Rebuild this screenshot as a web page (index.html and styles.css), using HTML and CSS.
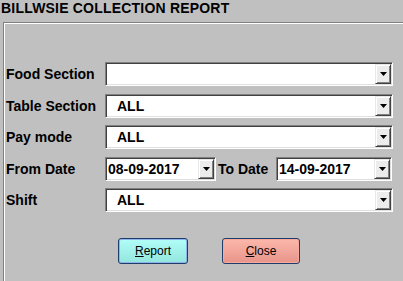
FILE: index.html
```html
<html>
  <head>
    <link rel="stylesheet" href="styles.css">
  </head>
  <body>
    <div class="title">BILLWSIE COLLECTION REPORT</div>
    <div class="panel">
      <div class="rows">
        <div class="row">
          <label class="label">Food Section</label>
          <div class="combo full">
            <span class="value"></span>
            <span class="drop"><svg width="7" height="4" viewBox="0 0 7 4"><polygon points="0,0 7,0 3.5,4" fill="#000"/></svg></span>
          </div>
        </div>
        <div class="row">
          <label class="label">Table Section</label>
          <div class="combo full">
            <span class="value">ALL</span>
            <span class="drop"><svg width="7" height="4" viewBox="0 0 7 4"><polygon points="0,0 7,0 3.5,4" fill="#000"/></svg></span>
          </div>
        </div>
        <div class="row">
          <label class="label">Pay mode</label>
          <div class="combo full">
            <span class="value">ALL</span>
            <span class="drop"><svg width="7" height="4" viewBox="0 0 7 4"><polygon points="0,0 7,0 3.5,4" fill="#000"/></svg></span>
          </div>
        </div>
        <div class="row">
          <label class="label">From Date</label>
          <div class="combo from-date">
            <span class="value date">08-09-2017</span>
            <span class="drop"><svg width="7" height="4" viewBox="0 0 7 4"><polygon points="0,0 7,0 3.5,4" fill="#000"/></svg></span>
          </div>
          <label class="to-label">To Date</label>
          <div class="combo to-date">
            <span class="value date">14-09-2017</span>
            <span class="drop"><svg width="7" height="4" viewBox="0 0 7 4"><polygon points="0,0 7,0 3.5,4" fill="#000"/></svg></span>
          </div>
        </div>
        <div class="row">
          <label class="label">Shift</label>
          <div class="combo full">
            <span class="value">ALL</span>
            <span class="drop"><svg width="7" height="4" viewBox="0 0 7 4"><polygon points="0,0 7,0 3.5,4" fill="#000"/></svg></span>
          </div>
        </div>
      </div>
      <div class="actions">
        <button class="btn report"><u>R</u>eport</button>
        <button class="btn close"><u>C</u>lose</button>
      </div>
    </div>
  </body>
</html>
```

FILE: styles.css
```css
* {
  box-sizing: border-box;
}

body {
  margin: 0;
  height: 281px;
  overflow: hidden;
  background-color: #c0c0c0;
  font-family: "Liberation Sans", Arial, sans-serif;
  color: #000;
}

.title {
  height: 16px;
  line-height: 16px;
  padding-left: 1px;
  font-size: 14px;
  font-weight: bold;
  letter-spacing: 0.2px;
  white-space: nowrap;
}

.panel {
  margin: 6px 0 0 3px;
  width: 400px;
  height: 259px;
  padding: 39px 0 0 2px;
  border-top: 1px solid #808080;
  border-left: 1px solid #808080;
  box-shadow: inset 1px 1px 0 #fff;
}

.rows {
  display: flex;
  flex-direction: column;
  gap: 7.5px;
}

.row {
  display: flex;
  align-items: center;
  height: 24px;
}

.label {
  width: 99px;
  font-size: 14px;
  font-weight: bold;
  white-space: nowrap;
}

.combo {
  display: flex;
  align-items: stretch;
  height: 24px;
  padding: 1px;
  background-color: #fff;
  border: 1px solid;
  border-color: #808080 #fff #fff #808080;
  box-shadow: inset 1px 1px 0 #404040, inset -1px -1px 0 #dfdfdf;
}

.full {
  width: 288px;
}

.from-date {
  width: 111px;
}

.to-date {
  width: 116px;
}

.to-label {
  width: 60px;
  padding-left: 2px;
  font-size: 14px;
  font-weight: bold;
  white-space: nowrap;
}

.value {
  flex: 1;
  display: flex;
  align-items: center;
  padding-left: 10px;
  font-size: 14px;
  font-weight: bold;
  white-space: nowrap;
  overflow: hidden;
}

.value.date {
  padding-left: 1px;
}

.drop {
  display: flex;
  align-items: center;
  justify-content: center;
  width: 16px;
  background-color: #ececec;
  border: 1px solid;
  border-color: #e8e8e8 #404040 #404040 #e8e8e8;
  box-shadow: inset 1px 1px 0 #fff, inset -1px -1px 0 #808080;
}

.actions {
  display: flex;
  gap: 34px;
  margin: 26px 0 0 112px;
}

.btn {
  height: 26px;
  padding: 0;
  border: 1px solid #1f3d6b;
  border-radius: 3px;
  font-family: "Liberation Sans", Arial, sans-serif;
  font-size: 12px;
  color: #000;
}

.report {
  width: 70px;
  background: linear-gradient(#b2fdf9, #92e6dd);
  box-shadow: inset 0 0 0 1px #8fb2ea;
}

.close {
  width: 78px;
  background: linear-gradient(#fcb8ab, #e8948a);
  box-shadow: inset 0 0 0 1px #f6a99c;
}
```
